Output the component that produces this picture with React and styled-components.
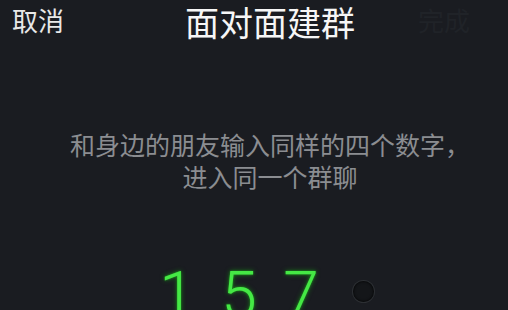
import React from 'react';
import styled, { createGlobalStyle } from 'styled-components';

const GlobalStyle = createGlobalStyle`
    html, body {
        margin: 0;
        padding: 0;
        background-color: #1a1c21;
    }
    body {
        font-family: "Noto Sans CJK SC", "Noto Sans", sans-serif;
    }
`;

const Screen = styled.div`
    width: 508px;
    height: 310px;
    overflow: hidden;
    background-color: #1a1c21;
    display: flex;
    flex-direction: column;
`;

const Header = styled.div`
    display: grid;
    grid-template-columns: 168px 204px 1fr;
    align-items: center;
    height: 44px;
`;

const NavButton = styled.div`
    font-size: 26px;
    line-height: 30px;
    color: ${(props) => (props.dim ? '#202328' : '#e8e8e8')};
    padding-left: ${(props) => (props.dim ? '46px' : '12px')};
    margin-top: -3px;
`;

const Title = styled.div`
    font-size: 34px;
    line-height: 40px;
    color: #f6f6f6;
    text-align: center;
    white-space: nowrap;
    margin-top: 2px;
`;

const Body = styled.div`
    display: flex;
    flex-direction: column;
    align-items: center;
    padding-left: 32px;
`;

const Hint = styled.p`
    margin: 86px 0 0 0;
    font-size: 25px;
    line-height: 32px;
    color: #8b8d91;
    text-align: center;
    white-space: pre-line;
`;

const Digits = styled.div`
    display: flex;
    margin-top: 72px;
`;

const Slot = styled.div`
    width: 62px;
    height: 50px;
    display: flex;
    justify-content: center;
    font-family: Roboto, "Liberation Sans", sans-serif;
    font-weight: 300;
    font-size: 64px;
    line-height: 1;
    color: #45e845;
    text-shadow: 0 0 2px #1f9e1f, 0 0 5px #1a7a1a;
`;

const Dot = styled.div`
    width: 21px;
    height: 21px;
    margin-top: 17px;
    border-radius: 50%;
    background-color: #141619;
    box-shadow: 0 0 0 1px #2c2f33, inset 0 0 3px #000;
`;

const App = () => {
    const code = ['1', '5', '7'];

    return (
        <Screen>
            <GlobalStyle />
            <Header>
                <NavButton>取消</NavButton>
                <Title>面对面建群</Title>
                <NavButton dim>完成</NavButton>
            </Header>
            <Body>
                <Hint>{'和身边的朋友输入同样的四个数字，\n进入同一个群聊'}</Hint>
                <Digits>
                    {code.map((d, i) => (
                        <Slot key={i}>{d}</Slot>
                    ))}
                    <Slot>
                        <Dot />
                    </Slot>
                </Digits>
            </Body>
        </Screen>
    );
};

export default App;
